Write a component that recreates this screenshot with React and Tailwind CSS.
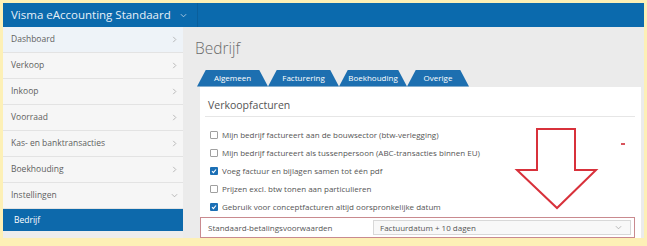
import React from "react";

const menu = [
  { label: "Dashboard", active: true },
  { label: "Verkoop" },
  { label: "Inkoop" },
  { label: "Voorraad" },
  { label: "Kas- en banktransacties" },
  { label: "Boekhouding" },
  { label: "Instellingen", open: true },
];

const tabs = [
  { label: "Algemeen", w: "w-[71px]" },
  { label: "Facturering", w: "w-[71px]" },
  { label: "Boekhouding", w: "w-[68px]" },
  { label: "Overige", w: "w-[62px]" },
];

const options = [
  { label: "Mijn bedrijf factureert aan de bouwsector (btw-verlegging)", checked: false },
  { label: "Mijn bedrijf factureert als tussenpersoon (ABC-transacties binnen EU)", checked: false },
  { label: "Voeg factuur en bijlagen samen tot één pdf", checked: true },
  { label: "Prijzen excl. btw tonen aan particulieren", checked: false },
  { label: "Gebruik voor conceptfacturen altijd oorspronkelijke datum", checked: true },
];

const Chevron = ({ down }) => (
  <svg width="7" height="7" viewBox="0 0 8 8" className="text-[#a8a8a8]">
    {down ? (
      <path d="M1 2.5 L4 5.5 L7 2.5" fill="none" stroke="currentColor" strokeWidth="0.9" />
    ) : (
      <path d="M2.5 1 L5.5 4 L2.5 7" fill="none" stroke="currentColor" strokeWidth="0.9" />
    )}
  </svg>
);

const Checkbox = ({ checked }) =>
  checked ? (
    <span className="flex h-[8px] w-[8px] shrink-0 items-center justify-center rounded-[1px] bg-[#1b6fb5]">
      <svg width="6" height="6" viewBox="0 0 6 6">
        <path d="M1 3.2 L2.4 4.6 L5 1.5" fill="none" stroke="white" strokeWidth="1.1" />
      </svg>
    </span>
  ) : (
    <span className="h-[8px] w-[8px] shrink-0 rounded-[1px] border border-[#a0a0a0] bg-white" />
  );

export default function App() {
  return (
    <div
      className="relative h-[246px] w-[647px] overflow-hidden bg-[#fdf0b6] pb-[8px] pl-[3px] pr-[3px] pt-[3px]"
      style={{ fontFamily: '"Open Sans", "Noto Sans", sans-serif' }}
    >
      <div className="flex h-full flex-col bg-[#ebebeb]">
        {/* top bar */}
        <div className="flex h-[24px] shrink-0 bg-[#0b6aad]">
          <div className="flex w-[195px] items-center justify-between border-r border-[#0a5f9c] pl-[8px] pr-[10px]">
            <span className="whitespace-nowrap text-[11.5px] leading-none text-[#e6f0f8]">
              Visma eAccounting Standaard
            </span>
            <svg width="7" height="7" viewBox="0 0 8 8">
              <path d="M1 2.5 L4 5.5 L7 2.5" fill="none" stroke="#b9d1e6" strokeWidth="1" />
            </svg>
          </div>
          <div className="flex-1" />
        </div>

        <div className="flex min-h-0 flex-1">
          {/* sidebar */}
          <div className="flex w-[180px] shrink-0 flex-col bg-[#f3f3f3]">
            {menu.map((m) => (
              <div
                key={m.label}
                className={`flex h-[26px] items-center justify-between border-b border-[#e3e3e3] pl-[8px] pr-[5px] ${
                  m.active ? "bg-[#eef3f8]" : "bg-[#f6f6f6]"
                }`}
              >
                <span className="text-[8.5px] text-[#5f5f5f]">{m.label}</span>
                <Chevron down={m.open} />
              </div>
            ))}
            <div className="flex h-[22px] items-center bg-[#0d69ab] pl-[11px]">
              <span className="text-[8.5px] text-white">Bedrijf</span>
            </div>
            <div className="flex-1 bg-[#ededed]" />
          </div>

          {/* main */}
          <div className="flex min-w-0 flex-1 flex-col pr-[3px]">
            <h1 className="ml-[12px] mt-[14px] text-[15.5px] font-light leading-none text-[#6b6b6b]">Bedrijf</h1>
            <div className="ml-[14px] mt-[13px] flex h-[17px]">
              {tabs.map((t) => (
                <div
                  key={t.label}
                  className={`flex items-center justify-center rounded-t-[3px] bg-[#1d6fb0] [clip-path:polygon(9px_0,calc(100%-9px)_0,100%_100%,0_100%)] ${t.w}`}
                >
                  <span className="whitespace-nowrap text-[8px] text-white">{t.label}</span>
                </div>
              ))}
            </div>
            <div className="ml-[17px] flex min-h-0 flex-1 flex-col bg-white pl-[5px] pr-[6px]">
              <div className="mt-[11px] border-b border-[#e6e6e6] pb-[3px] pl-[3px] text-[10.5px] text-[#555]">
                Verkoopfacturen
              </div>
              <div className="mt-[9px] flex flex-col">
                {options.map((o) => (
                  <div key={o.label} className="flex h-[18px] items-center gap-[4px] pl-[5px]">
                    <Checkbox checked={o.checked} />
                    <span className="whitespace-nowrap text-[8px] text-[#555]">{o.label}</span>
                  </div>
                ))}
              </div>
              <div className="-ml-[5px] mt-[1px] flex h-[21px] items-center border border-[#c98a8f] pl-[7px] pr-[3px]">
                <span className="w-[165px] text-[8px] text-[#555]">Standaard-betalingsvoorwaarden</span>
                <div className="flex h-[15px] flex-1 items-center justify-between border border-[#d8d8d8] bg-[#f8f8f8] pl-[6px] pr-[8px]">
                  <span className="text-[8px] text-[#555]">Factuurdatum + 10 dagen</span>
                  <Chevron down />
                </div>
              </div>
            </div>
          </div>
        </div>
      </div>

      {/* annotation: red dash */}
      <div className="absolute left-[621px] top-[143px] h-[2px] w-[4px] bg-[#d8545c]" />

      {/* annotation: arrow */}
      <svg className="absolute left-[514px] top-[127px]" width="86" height="86" viewBox="0 0 86 86">
        <path
          d="M23 2 L61 2 L61 43 L82 43 L43 81 L3 43 L23 43 Z"
          fill="none"
          stroke="#d8313b"
          strokeWidth="2"
          strokeLinejoin="miter"
        />
      </svg>
    </div>
  );
}
